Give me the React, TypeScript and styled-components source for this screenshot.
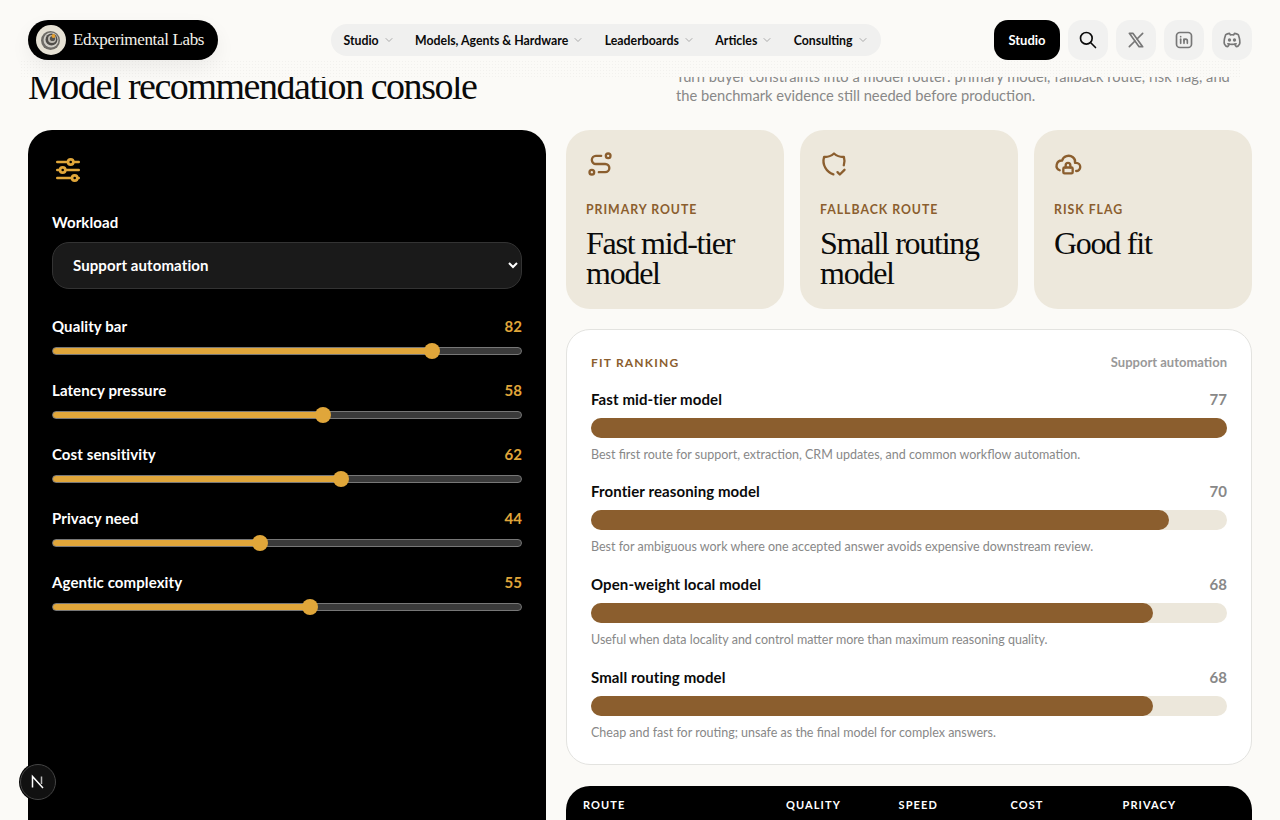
import React from 'react';
import styled, { createGlobalStyle } from 'styled-components';
import {
  TbAdjustmentsHorizontal,
  TbBrandDiscord,
  TbBrandLinkedin,
  TbBrandX,
  TbChevronDown,
  TbCloudLock,
  TbRoute,
  TbSearch,
  TbShieldCheck,
} from 'react-icons/tb';

const SANS = `'Lato', 'Noto Sans', sans-serif`;
const SERIF = `'Liberation Serif', serif`;
const BROWN = '#8b5e2e';
const GOLD = '#e0a63a';

const navItems = ['Studio', 'Models, Agents & Hardware', 'Leaderboards', 'Articles', 'Consulting'];

const sliders = [
  { label: 'Quality bar', value: 82 },
  { label: 'Latency pressure', value: 58 },
  { label: 'Cost sensitivity', value: 62 },
  { label: 'Privacy need', value: 44 },
  { label: 'Agentic complexity', value: 55 },
];

const routes = [
  { icon: <TbRoute />, label: 'Primary route', value: 'Fast mid-tier model' },
  { icon: <TbShieldCheck />, label: 'Fallback route', value: 'Small routing model' },
  { icon: <TbCloudLock />, label: 'Risk flag', value: 'Good fit' },
];

const ranking = [
  { name: 'Fast mid-tier model', score: 77, note: 'Best first route for support, extraction, CRM updates, and common workflow automation.' },
  { name: 'Frontier reasoning model', score: 70, note: 'Best for ambiguous work where one accepted answer avoids expensive downstream review.' },
  { name: 'Open-weight local model', score: 68, note: 'Useful when data locality and control matter more than maximum reasoning quality.' },
  { name: 'Small routing model', score: 68, note: 'Cheap and fast for routing; unsafe as the final model for complex answers.' },
];

const App = () => {
  const topScore = Math.max(...ranking.map((r) => r.score));

  return (
    <>
      <GlobalStyle />
      <Page>
        <Header>
          <Logo>
            <LogoMark />
            Edxperimental Labs
          </Logo>
          <Nav>
            {navItems.map((item) => (
              <NavItem key={item}>
                {item}
                <TbChevronDown />
              </NavItem>
            ))}
          </Nav>
          <Actions>
            <StudioButton>Studio</StudioButton>
            <IconButton $dark>
              <TbSearch />
            </IconButton>
            <IconButton>
              <TbBrandX />
            </IconButton>
            <IconButton>
              <TbBrandLinkedin />
            </IconButton>
            <IconButton>
              <TbBrandDiscord />
            </IconButton>
          </Actions>
        </Header>

        <Intro>
          <Title>Model recommendation console</Title>
          <Lead>
            Turn buyer constraints into a model router: primary model, fallback route, risk flag, and the benchmark
            evidence still needed before production.
          </Lead>
        </Intro>

        <Console>
          <Controls>
            <ControlsIcon>
              <TbAdjustmentsHorizontal />
            </ControlsIcon>
            <FieldLabel htmlFor='workload'>Workload</FieldLabel>
            <Select id='workload' defaultValue='support'>
              <option value='support'>Support automation</option>
            </Select>
            <SliderList>
              {sliders.map((s) => (
                <li key={s.label}>
                  <SliderHead>
                    <span>{s.label}</span>
                    <SliderValue>{s.value}</SliderValue>
                  </SliderHead>
                  <Range
                    type='range'
                    min={0}
                    max={100}
                    defaultValue={s.value}
                    style={{ '--pct': `calc(8px + (100% - 16px) * ${s.value / 100})` } as React.CSSProperties}
                  />
                </li>
              ))}
            </SliderList>
          </Controls>

          <Results>
            <RouteCards>
              {routes.map((r) => (
                <RouteCard key={r.label}>
                  <RouteIcon>{r.icon}</RouteIcon>
                  <RouteLabel>{r.label}</RouteLabel>
                  <RouteValue>{r.value}</RouteValue>
                </RouteCard>
              ))}
            </RouteCards>

            <RankingCard>
              <RankingHead>
                <RankingTitle>Fit ranking</RankingTitle>
                <RankingContext>Support automation</RankingContext>
              </RankingHead>
              {ranking.map((r) => (
                <RankRow key={r.name}>
                  <RankHead>
                    <span>{r.name}</span>
                    <RankScore>{r.score}</RankScore>
                  </RankHead>
                  <Bar>
                    <BarFill style={{ width: `${(r.score / topScore) * 100}%` }} />
                  </Bar>
                  <RankNote>{r.note}</RankNote>
                </RankRow>
              ))}
            </RankingCard>

            <RouteTable>
              <span>Route</span>
              <span>Quality</span>
              <span>Speed</span>
              <span>Cost</span>
              <span>Privacy</span>
            </RouteTable>
          </Results>
        </Console>

        <DevBadge>
          <svg width='16' height='16' viewBox='0 0 16 16' fill='none'>
            <path d='M2.5 13.5V2.5L13 14' stroke='#fff' strokeWidth='1.5' />
            <path d='M11.5 2.5V10' stroke='#bbb' strokeWidth='1.5' />
          </svg>
        </DevBadge>
      </Page>
    </>
  );
};

const LogoMark = () => (
  <svg width='30' height='30' viewBox='0 0 30 30' fill='none'>
    <circle cx='15' cy='15' r='15' fill='#e6e1d4' />
    <circle cx='14.5' cy='15.5' r='9.5' fill='#6f6c67' />
    <circle cx='15' cy='15' r='7.5' fill='#cfccc5' />
    <circle cx='15.5' cy='14.5' r='6' fill='#4f4c48' />
    <circle cx='16' cy='14' r='4' fill='#bdb9b1' />
    <circle cx='16.5' cy='13.5' r='2.6' fill='#55524e' />
    <circle cx='17.5' cy='11' r='1.9' fill='#e5a030' />
  </svg>
);

const GlobalStyle = createGlobalStyle`
  html, body {
    margin: 0;
    height: 100%;
    overflow: hidden;
    background: #fbfaf7;
  }
  body {
    font-family: ${SANS};
    color: #0a0a0a;
  }
  * {
    box-sizing: border-box;
  }
`;

const Page = styled.div`
  position: relative;
  height: 820px;
  padding: 0 28px;
  overflow: hidden;
`;

const Header = styled.header`
  position: absolute;
  top: 0;
  left: 0;
  right: 0;
  height: 77px;
  padding: 20px 28px 0;
  z-index: 10;
  display: flex;
  justify-content: space-between;
  align-items: flex-start;
  background-color: #fbfaf7;

  &::after {
    content: '';
    position: absolute;
    left: 20px;
    right: 40px;
    top: 60px;
    height: 17px;
    background-image: radial-gradient(rgba(0, 0, 0, 0.035) 0.7px, transparent 0.8px);
    background-size: 3px 3px;
    pointer-events: none;
  }
`;

const Logo = styled.div`
  display: flex;
  align-items: center;
  gap: 7px;
  height: 40px;
  width: 190px;
  padding-left: 8px;
  border-radius: 20px;
  background: #000;
  color: #f3f1ea;
  font-family: ${SERIF};
  font-size: 17px;
  line-height: 42px;
  letter-spacing: -0.35px;
  white-space: nowrap;
  box-shadow: 0 8px 20px rgba(0, 0, 0, 0.06);
`;

const Nav = styled.nav`
  display: flex;
  align-items: center;
  gap: 20.5px;
  height: 32px;
  margin-top: 4px;
  padding: 0 12px;
  border-radius: 16px;
  background: #f0f0ef;
`;

const NavItem = styled.a`
  display: flex;
  align-items: center;
  gap: 4px;
  font-size: 12.3px;
  font-weight: 700;
  color: #0a0a0a;
  white-space: nowrap;

  svg {
    width: 12px;
    height: 12px;
    color: #aaa;
  }
`;

const Actions = styled.div`
  display: flex;
  gap: 8px;
`;

const StudioButton = styled.button`
  width: 66px;
  height: 40px;
  border: 0;
  border-radius: 14px;
  background: #000;
  color: #fff;
  font-family: ${SANS};
  font-size: 13px;
  font-weight: 700;
`;

const IconButton = styled.button<{ $dark?: boolean }>`
  width: 40px;
  height: 40px;
  display: flex;
  align-items: center;
  justify-content: center;
  border: 0;
  border-radius: 14px;
  background: #f1f1f0;
  color: ${(p) => (p.$dark ? '#0a0a0a' : '#777')};

  svg {
    width: 20px;
    height: 20px;
  }
`;

const Intro = styled.section`
  display: flex;
  justify-content: space-between;
  align-items: flex-end;
  height: 106px;
`;

const Title = styled.h1`
  margin: 0;
  font-family: ${SERIF};
  font-size: 38px;
  font-weight: 400;
  line-height: 40px;
  letter-spacing: -1.47px;
  white-space: nowrap;
`;

const Lead = styled.p`
  width: 576px;
  margin: 0 0 1px;
  padding-right: 14px;
  font-size: 14.7px;
  line-height: 19px;
  color: #888;
`;

const Console = styled.main`
  display: grid;
  grid-template-columns: 518px 686px;
  gap: 20px;
  margin-top: 24px;
`;

const Controls = styled.aside`
  padding: 24px;
  border-radius: 24px;
  background: #000;
  color: #fff;
`;

const ControlsIcon = styled.div`
  height: 32px;
  margin-bottom: 27px;
  color: ${GOLD};

  svg {
    display: block;
    width: 32px;
    height: 32px;
  }
`;

const FieldLabel = styled.label`
  display: block;
  margin-bottom: 11px;
  font-size: 15px;
  letter-spacing: 0.1px;
  font-weight: 700;
  line-height: 18px;
`;

const Select = styled.select`
  display: block;
  width: 100%;
  height: 47px;
  padding: 0 4px 2px 16px;
  border: 1px solid #333;
  border-radius: 17px;
  background: #1a1a1a;
  color: #fff;
  color-scheme: dark;
  font-family: ${SANS};
  font-size: 15px;
  letter-spacing: 0.1px;
  font-weight: 700;
`;

const SliderList = styled.ul`
  display: flex;
  flex-direction: column;
  gap: 22px;
  margin: 28px 0 0;
  padding: 0;
  list-style: none;
`;

const SliderHead = styled.div`
  display: flex;
  justify-content: space-between;
  font-size: 15px;
  letter-spacing: 0.1px;
  font-weight: 700;
  line-height: 18px;
`;

const SliderValue = styled.span`
  color: ${GOLD};
`;

const Range = styled.input`
  display: block;
  width: 100%;
  height: 16px;
  margin: 8px 0 0;
  background: transparent;
  appearance: none;
  -webkit-appearance: none;

  &::-webkit-slider-runnable-track {
    height: 8px;
    border: 1px solid #777;
    border-radius: 4px;
    background: linear-gradient(to right, ${GOLD} var(--pct), #3a3a3a var(--pct));
  }
  &::-webkit-slider-thumb {
    -webkit-appearance: none;
    width: 16px;
    height: 16px;
    margin-top: -5px;
    border-radius: 50%;
    background: ${GOLD};
  }
`;

const Results = styled.div`
  display: flex;
  flex-direction: column;
  gap: 20px;
`;

const RouteCards = styled.div`
  display: grid;
  grid-template-columns: repeat(3, 1fr);
  gap: 16px;
`;

const RouteCard = styled.article`
  height: 179px;
  padding: 20px;
  border-radius: 24px;
  background: #ede8dc;
`;

const RouteIcon = styled.div`
  height: 28px;
  margin-bottom: 24px;
  color: ${BROWN};

  svg {
    display: block;
    width: 28px;
    height: 28px;
  }
`;

const RouteLabel = styled.div`
  font-size: 12.3px;
  font-weight: 700;
  line-height: 16px;
  letter-spacing: 0.08em;
  text-transform: uppercase;
  color: ${BROWN};
`;

const RouteValue = styled.div`
  margin-top: 10px;
  font-family: ${SERIF};
  font-size: 32px;
  line-height: 30px;
  letter-spacing: -1.25px;
`;

const RankingCard = styled.section`
  display: flex;
  flex-direction: column;
  gap: 16.67px;
  height: 436px;
  padding: 24px;
  border: 1px solid #e3e3e0;
  border-radius: 24px;
  background: #fff;
`;

const RankingHead = styled.div`
  flex-shrink: 0;
  display: flex;
  justify-content: space-between;
  align-items: center;
  height: 16px;
  margin-bottom: 3px;
`;

const RankingTitle = styled.div`
  font-size: 12px;
  font-weight: 700;
  letter-spacing: 0.1em;
  text-transform: uppercase;
  color: ${BROWN};
`;

const RankingContext = styled.div`
  font-size: 13px;
  font-weight: 700;
  color: #999;
`;

const RankRow = styled.div`
  flex-shrink: 0;
  height: 76px;
`;

const RankHead = styled.div`
  display: flex;
  justify-content: space-between;
  font-size: 15px;
  letter-spacing: 0.1px;
  font-weight: 700;
  line-height: 18px;
`;

const RankScore = styled.span`
  color: #888;
`;

const Bar = styled.div`
  height: 20px;
  margin-top: 10px;
  border-radius: 10px;
  background: #ece7db;
`;

const BarFill = styled.div`
  height: 100%;
  border-radius: 10px;
  background: ${BROWN};
`;

const RankNote = styled.p`
  margin: 9px 0 0;
  font-size: 12.5px;
  line-height: 16px;
  color: #888;
`;

const RouteTable = styled.section`
  display: grid;
  grid-template-columns: 203px 112.5px 112px 112px 1fr;
  height: 200px;
  margin-top: 1px;
  padding: 12px 17px;
  border-radius: 24px;
  background: #000;
  color: #fff;
  font-size: 11px;
  font-weight: 700;
  line-height: 14px;
  letter-spacing: 0.1em;
  text-transform: uppercase;
`;

const DevBadge = styled.div`
  position: absolute;
  left: 20px;
  top: 764px;
  z-index: 20;
  width: 36px;
  height: 36px;
  display: flex;
  align-items: center;
  justify-content: center;
  border: 1px solid #444;
  border-radius: 50%;
  background: #111;
  box-shadow: 0 0 0 1px #000;
`;

export default App;
